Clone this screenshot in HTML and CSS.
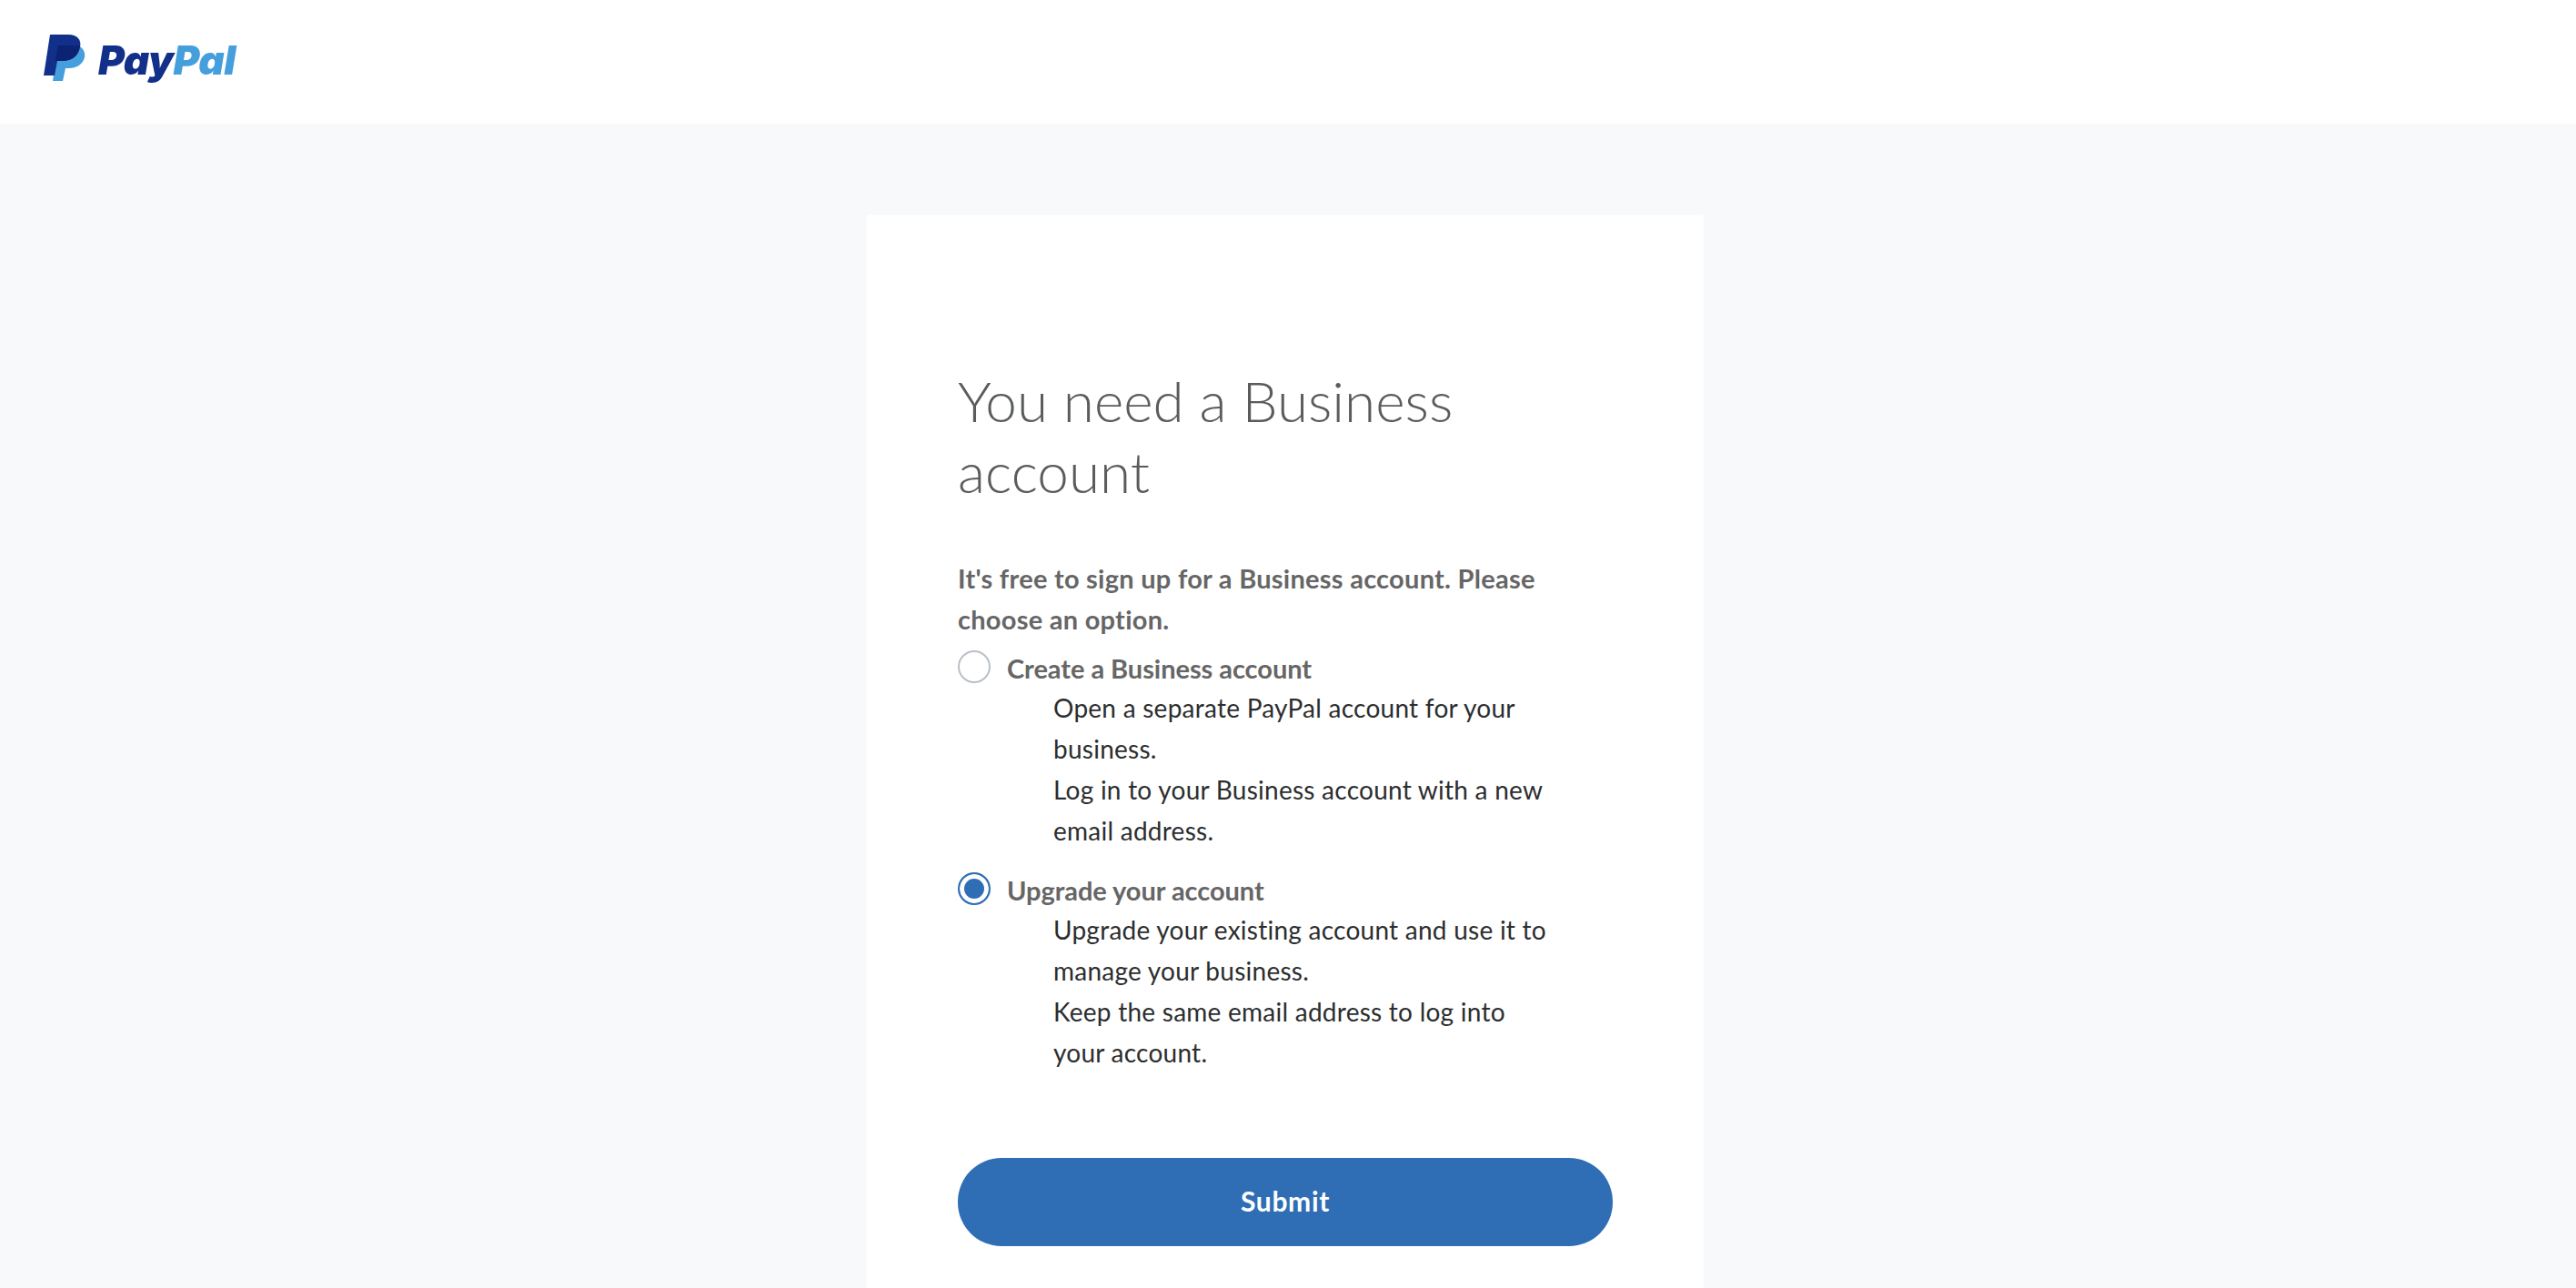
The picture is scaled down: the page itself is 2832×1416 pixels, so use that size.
FILE: index.html
```html
<!DOCTYPE html>
<html>
<head>
  <meta charset="UTF-8" />
  <title>PayPal</title>
  <link rel="stylesheet" href="styles.css">
</head>
<body>
  <header class="site-header">
    <a class="logo" href="#">
      <svg class="logo-mark" viewBox="0 0 46 52" width="46" height="52">
        <path fill="#459fdd" d="M16 12H36C43 13 46 19 45 25C43 33 36 37 28 37H24L21 51H10Z"/>
        <path fill="#12308a" d="M7 0H27C37 0 42 6 40 14C38 24 31 29 20 29H15L12 45H0Z"/>
        <path fill="#0c2273" d="M16 12H40C38 24 31 29 20 29H12.5Z"/>
      </svg>
      <span class="logo-text">Pay<span class="logo-text-light">Pal</span></span>
    </a>
  </header>
  <main class="page">
    <section class="card">
      <h1 class="card-title">You need a Business account</h1>
      <p class="card-intro">It's free to sign up for a Business account. Please choose an option.</p>
      <form class="options">
        <label class="option">
          <span class="option-head">
            <input class="radio" type="radio" name="choice">
            <span class="option-name">Create a Business account</span>
          </span>
          <span class="option-text">Open a separate PayPal account for your business.<br>Log in to your Business account with a new email address.</span>
        </label>
        <label class="option">
          <span class="option-head">
            <input class="radio" type="radio" name="choice" checked>
            <span class="option-name">Upgrade your account</span>
          </span>
          <span class="option-text">Upgrade your existing account and use it to manage your business.<br>Keep the same email address to log into your account.</span>
        </label>
        <button class="submit-btn" type="button">Submit</button>
      </form>
    </section>
  </main>
</body>
</html>
```
FILE: styles.css
```css
html, body {
  margin: 0;
  height: 100%;
  overflow: hidden;
}
body {
  font-family: "Lato", "Noto Sans", sans-serif;
  background: #f8f9fa;
  color: #2c2e2f;
}
.site-header {
  background: #fff;
  height: 136px;
  padding: 38px 0 0 48px;
  box-sizing: border-box;
}
.logo {
  display: flex;
  align-items: flex-start;
  text-decoration: none;
  filter: blur(0.5px);
}
.logo-mark {
  display: block;
}
.logo-text {
  font-family: "Inter", sans-serif;
  font-weight: 900;
  font-style: italic;
  font-size: 44px;
  line-height: 52px;
  letter-spacing: -0.5px;
  margin-left: 14px;
  margin-top: 2px;
  color: #12308a;
}
.logo-text-light {
  color: #459fdd;
}
.page {
  display: flex;
  justify-content: center;
  padding: 100px 6px 0 0;
}
.card {
  background: #fff;
  width: 920px;
  padding: 165px 100px 0;
  box-sizing: border-box;
  min-height: 1200px;
}
.card-title {
  margin: 0 0 56px;
  font-size: 62px;
  line-height: 78px;
  font-weight: 300;
  color: #595b5d;
}
.card-intro {
  margin: 0 0 9px;
  font-size: 29px;
  line-height: 45px;
  font-weight: 700;
  letter-spacing: 0.26px;
  color: #666;
}
.options {
  display: flex;
  flex-direction: column;
}
.option {
  display: flex;
  flex-direction: column;
  margin-bottom: 20px;
}
.option-head {
  display: flex;
  align-items: flex-start;
  height: 44px;
}
.radio {
  appearance: none;
  width: 36px;
  height: 36px;
  margin: 3px 18px 0 0;
  border: 2px solid #b9c0c7;
  border-radius: 50%;
  background: #fff;
  box-sizing: border-box;
}
.radio:checked {
  border: 2px solid #2f6eb5;
  box-shadow: inset 0 0 0 5px #fff;
  background: #2f6eb5;
}
.option-name {
  font-size: 29px;
  line-height: 46px;
  font-weight: 700;
  letter-spacing: -0.05px;
  color: #666;
}
.option-text {
  margin-left: 105px;
  max-width: 555px;
  font-size: 28px;
  line-height: 45px;
  letter-spacing: 0.25px;
}
.submit-btn {
  margin-top: 73px;
  height: 97px;
  padding: 0 0 3px;
  border: none;
  border-radius: 48px;
  background: #2f6eb5;
  color: #fff;
  font-family: inherit;
  font-size: 30px;
  font-weight: 700;
  letter-spacing: 0.7px;
}
```
